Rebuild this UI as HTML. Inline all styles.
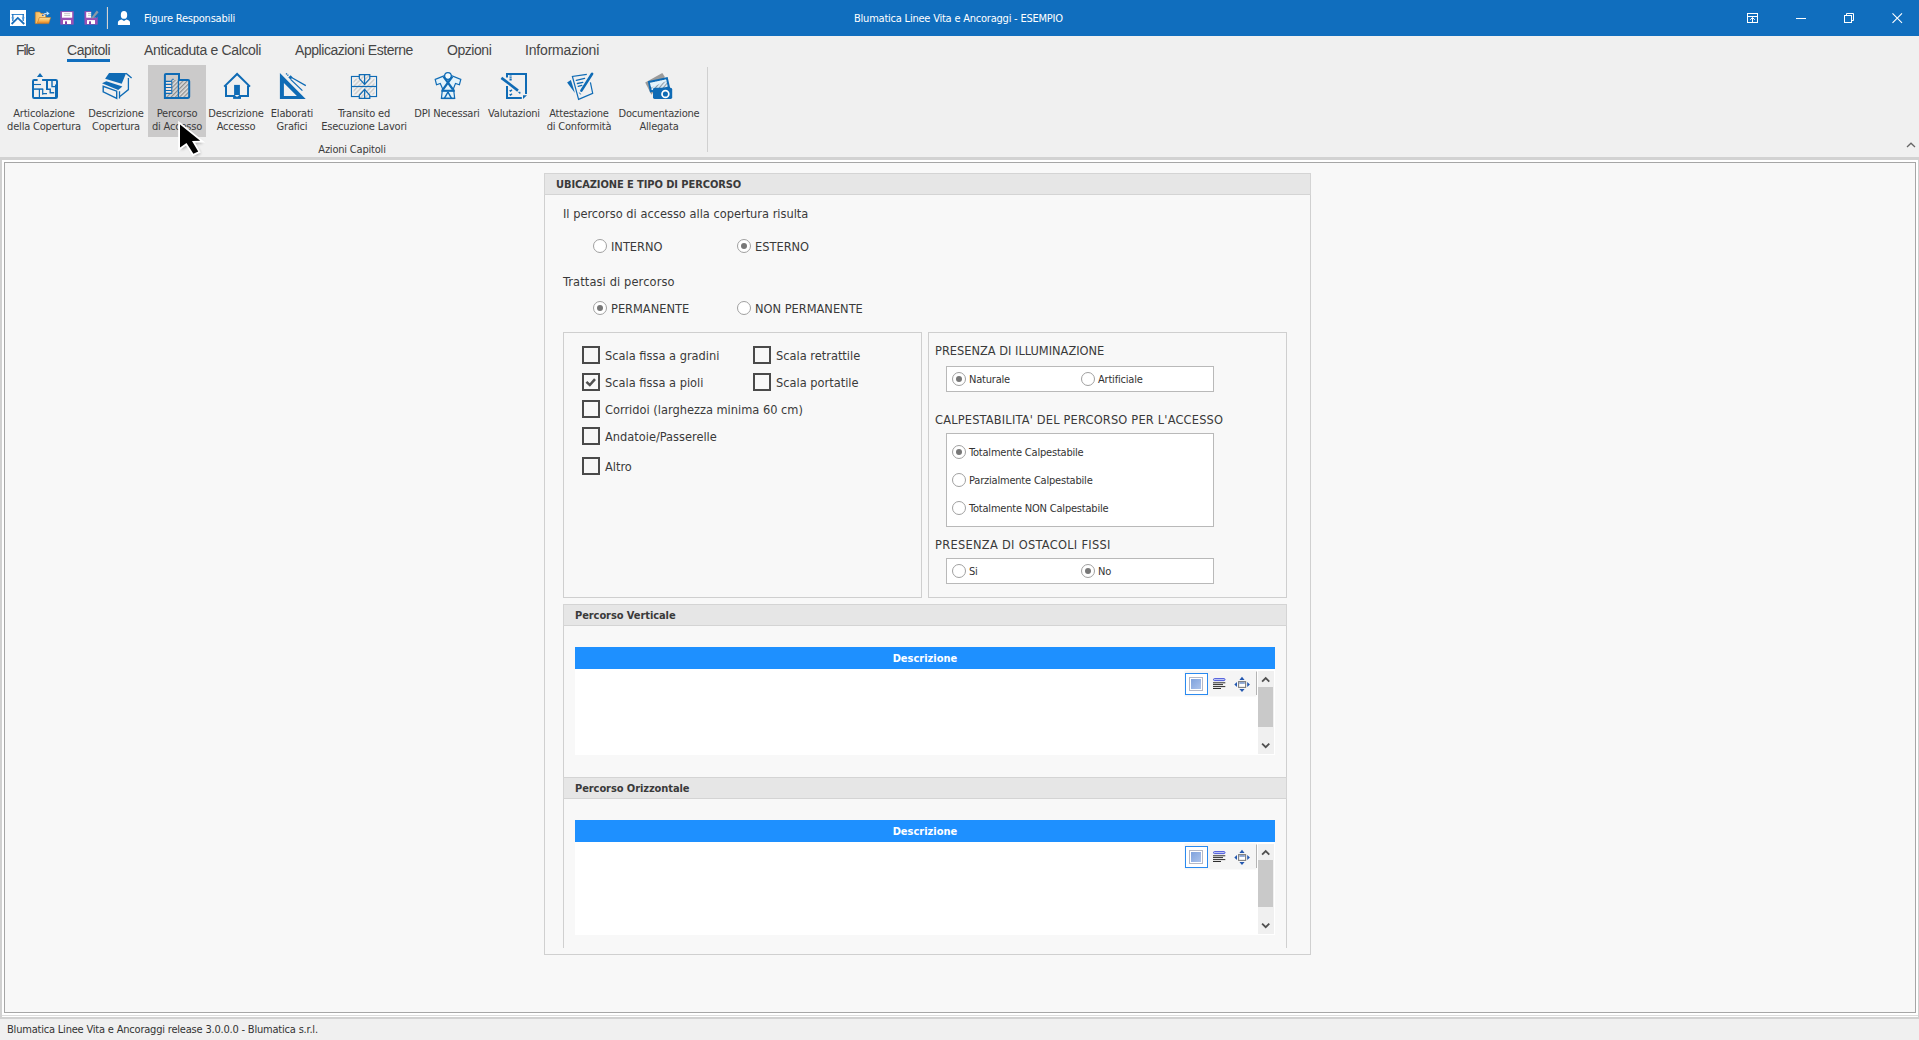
<!DOCTYPE html>
<html lang="it">
<head>
<meta charset="utf-8">
<title>Blumatica Linee Vita e Ancoraggi - ESEMPIO</title>
<style>
*{box-sizing:border-box;margin:0;padding:0}
html,body{width:1919px;height:1040px;overflow:hidden;background:#f0f0f0}
body{position:relative;font-family:"Liberation Sans",sans-serif;color:#333;font-size:11px}
.abs{position:absolute}
#titlebar{position:absolute;left:0;top:0;width:1919px;height:36px;background:#106ebe;color:#fff}
#titlebar .t{position:absolute;top:12px;font-family:"DejaVu Sans Condensed","Liberation Sans",sans-serif;font-size:11px;line-height:14px;white-space:nowrap;letter-spacing:-0.22px}
#menubar{position:absolute;left:0;top:36px;width:1919px;height:28px;background:#f0f0f0}
#menubar span{position:absolute;top:5px;font-size:14px;line-height:18px;color:#464646;white-space:nowrap;letter-spacing:-0.45px}
#ribbon{position:absolute;left:0;top:64px;width:1919px;height:93px;background:#f0f0f0}
.rb{position:absolute;top:43px;font-family:"DejaVu Sans Condensed","Liberation Sans",sans-serif;font-size:11px;line-height:13px;color:#3c3c3c;text-align:center;white-space:nowrap;transform:translateX(-50%);letter-spacing:-0.2px}
.ric{position:absolute;top:8px;width:28px;height:28px}
#band{position:absolute;left:0;top:157px;width:1919px;height:3px;background:#d2d2d2}
#client{position:absolute;left:0;top:160px;width:1919px;height:859px;background:#d1d1d1}
#client .w{position:absolute;left:2px;top:0;width:1916px;height:857px;background:#fff}
#client .l{position:absolute;left:2px;top:855px;width:1916px;height:1px;background:#dcdcdc}
#client .g{position:absolute;left:4px;top:2px;width:1912px;height:851px;background:#a6a6a6}
#client .c{position:absolute;left:5px;top:3px;width:1910px;height:849px;background:#f8f8f8}
#status{position:absolute;left:0;top:1019px;width:1919px;height:21px;background:#f0f0f0}
#status span{position:absolute;left:7px;top:4px;font-family:"DejaVu Sans Condensed","Liberation Sans",sans-serif;letter-spacing:-0.2px;font-size:11px;line-height:14px;color:#333;white-space:nowrap}
.v{font-family:"DejaVu Sans","Liberation Sans",sans-serif}
.lab{position:absolute;font-family:"DejaVu Sans Condensed","Liberation Sans",sans-serif;font-size:12.7px;line-height:15px;color:#3a3a3a;white-space:nowrap}
.slab{position:absolute;margin-top:1px;font-family:"DejaVu Sans Condensed","Liberation Sans",sans-serif;font-size:11px;line-height:14px;color:#333;white-space:nowrap;letter-spacing:-0.2px}
.hdr{position:absolute;background:#e6e6e6;border:1px solid #d4d4d4;font-family:"DejaVu Sans Condensed","Liberation Sans",sans-serif;font-weight:bold;font-size:11px;color:#3a3a3a;white-space:nowrap;letter-spacing:-0.08px}
.box{position:absolute;border:1px solid #cfcfcf;background:#f8f8f8}
.wbox{position:absolute;border:1px solid #b9b9b9;background:#fff}
.radio{position:absolute;width:14px;height:14px;border-radius:50%;border:1px solid #a0a0a0;background:#fff}
.radio.on::after{content:"";position:absolute;left:3px;top:3px;width:6px;height:6px;border-radius:50%;background:#777}
.chk{position:absolute;width:18px;height:18px;border:2px solid #4a4a4a;background:#f8f8f8}
.bluebar{position:absolute;background:#1e90ff;color:#fff;font-family:"DejaVu Sans Condensed","Liberation Sans",sans-serif;font-weight:bold;font-size:11px;text-align:center}

.sb{position:absolute;width:16px;background:#f0f0f0}
.sb i{position:absolute;left:0;width:16px;background:#c8c8c8}
.lab.up{letter-spacing:0.1px}
</style>
</head>
<body>
<!-- TITLE BAR -->
<div id="titlebar">
  <svg class="abs" style="left:0;top:0" width="140" height="36" viewBox="0 0 140 36">
    <defs>
      <linearGradient id="fg" x1="0" y1="0" x2="0" y2="1"><stop offset="0" stop-color="#ffe9a8"/><stop offset="0.6" stop-color="#f8b04a"/><stop offset="1" stop-color="#d9761c"/></linearGradient>
      <linearGradient id="fb" x1="0" y1="0" x2="1" y2="0"><stop offset="0" stop-color="#f6b85a"/><stop offset="1" stop-color="#fde6a6"/></linearGradient>
    </defs>
    <!-- app icon -->
    <rect x="10" y="10" width="16" height="16" fill="#fff"/>
    <path d="M11.6 24 L17.8 17.9 L24.2 24" fill="none" stroke="#1a6fbd" stroke-width="1.8"/>
    <path d="M11.5 14.5 H24" stroke="#3b8ad0" stroke-width="1"/>
    <path d="M12.8 14 V21 M23.2 14 V21" stroke="#1a6fbd" stroke-width="1.2"/>
    <path d="M11.2 17.5 H14.4 L12.8 20 Z M21.6 17.5 H24.8 L23.2 20 Z" fill="#4a9ade"/>
    <!-- folder -->
    <path d="M35.3 12.6 Q35.3 12 36 12 H39.6 L41 13.6 H45.6 V17.5 H39.5 L37.5 23.6 H35.3 Z" fill="url(#fb)" stroke="#d9811f" stroke-width="0.6"/>
    <path d="M39.4 17.6 H50.6 L48.7 23.6 H37.2 Z" fill="url(#fg)" stroke="#d9811f" stroke-width="0.6"/>
    <path d="M42.4 15.8 Q44 13.2 47.2 13.6" fill="none" stroke="#2a4fa8" stroke-width="1.6"/>
    <path d="M43 15.2 Q44.4 13 47.4 13.2" fill="none" stroke="#bfe6ff" stroke-width="1.1"/>
    <path d="M46.6 11.2 L49.6 13.4 L46.8 15.4 Z" fill="#bfe6ff"/>
    <!-- save -->
    <rect x="60.3" y="11.2" width="13.4" height="13.4" fill="#9a50b4"/>
    <rect x="62" y="12.1" width="10.2" height="5.6" fill="#fff"/>
    <path d="M64.2 13.6 H70.2 M64.2 15.4 H70.2" stroke="#b9b9b9" stroke-width="0.8"/>
    <rect x="63" y="20.1" width="8" height="3.9" fill="#fff"/>
    <rect x="65" y="21.3" width="2" height="2.7" fill="#8a3fa6"/>
    <!-- save as -->
    <rect x="84.5" y="11.2" width="13.2" height="13.4" fill="#9a50b4"/>
    <rect x="86.2" y="12.1" width="9.8" height="5.6" fill="#fff"/>
    <path d="M88 13.6 H92 M88 15.4 H92" stroke="#b9b9b9" stroke-width="0.8"/>
    <rect x="87" y="20.1" width="8" height="3.9" fill="#fff"/>
    <rect x="89" y="21.3" width="2" height="2.7" fill="#8a3fa6"/>
    <path d="M91.2 11 H98 V16.4 L96.6 17.8 H91.2 Z" fill="#106ebe"/>
    <path d="M92 16.8 L96.8 10.6 L98.6 12.2 L93.6 18 L91.6 18.4 Z" fill="#8d99a6"/>
    <!-- separator -->
    <rect x="106.9" y="7" width="1" height="22" fill="#e9ddd3"/>
    <!-- user -->
    <ellipse cx="124" cy="14.9" rx="3.2" ry="3.9" fill="#fff"/>
    <path d="M117.9 24.9 V22.6 Q117.9 20.6 121.6 19.6 L124 21 L126.4 19.6 Q130 20.6 130 22.6 V24.9 Z" fill="#fff"/>
  </svg>
  <svg class="abs" style="left:1740px;top:0" width="179" height="36" viewBox="1740 0 179 36" fill="none" stroke="#fff" stroke-width="1">
    <rect x="1747.5" y="13.5" width="10" height="9"/>
    <path d="M1747.5 16.5 H1757.5 M1752.5 17.6 V22.5 M1750.2 19.8 L1752.5 17.5 L1754.8 19.8"/>
    <path d="M1796 18.5 H1806"/>
    <path d="M1846.5 15 V13.5 H1853.5 V20.5 H1852"/>
    <rect x="1844.5" y="15.5" width="7" height="7"/>
    <path d="M1892.5 13.3 L1902 22.9 M1902 13.3 L1892.5 22.9" stroke-width="1.1"/>
  </svg>

  <span class="t" style="left:144px">Figure Responsabili</span>
  <span class="t" style="left:854px">Blumatica Linee Vita e Ancoraggi - ESEMPIO</span>
</div>
<!-- MENU BAR -->
<div id="menubar">
  <span style="left:16px;letter-spacing:-1.1px">File</span>
  <span style="left:67px">Capitoli</span>
  <span style="left:144px;letter-spacing:-0.33px">Anticaduta e Calcoli</span>
  <span style="left:295px">Applicazioni Esterne</span>
  <span style="left:447px">Opzioni</span>
  <span style="left:525px;letter-spacing:-0.18px">Informazioni</span>
  <div class="abs" style="left:67px;top:23px;width:43px;height:3px;background:#106ebe"></div>
</div>
<!-- RIBBON -->
<div id="ribbon">
  <div class="abs" style="left:148px;top:1px;width:58px;height:72px;background:#cbcaca"></div>
  <div class="rb" style="left:44px">Articolazione<br>della Copertura</div>
  <div class="rb" style="left:116px">Descrizione<br>Copertura</div>
  <div class="rb" style="left:177px">Percorso<br>di Accesso</div>
  <div class="rb" style="left:236px">Descrizione<br>Accesso</div>
  <div class="rb" style="left:292px">Elaborati<br>Grafici</div>
  <div class="rb" style="left:364px">Transito ed<br>Esecuzione Lavori</div>
  <div class="rb" style="left:447px">DPI Necessari</div>
  <div class="rb" style="left:514px">Valutazioni</div>
  <div class="rb" style="left:579px">Attestazione<br>di Conformità</div>
  <div class="rb" style="left:659px">Documentazione<br>Allegata</div>
  <div class="rb" style="left:352px;top:79px">Azioni Capitoli</div>
  <div class="abs" style="left:707px;top:3px;width:1px;height:85px;background:#d0d0d0"></div>
</div>

<svg class="abs" style="left:0;top:64px" width="720" height="42" viewBox="0 64 720 42">
  <defs>
    <pattern id="h1" width="3" height="3" patternUnits="userSpaceOnUse" patternTransform="rotate(-45)"><rect width="3" height="3" fill="#dedede"/><rect width="3" height="1.3" fill="#8f8f8f"/></pattern>
    <pattern id="h2" width="3.2" height="3.2" patternUnits="userSpaceOnUse" patternTransform="rotate(-45)"><rect width="3.2" height="3.2" fill="#f0f0f0"/><rect width="3.2" height="1.5" fill="#cfcfcf"/></pattern>
    <pattern id="h3" width="3" height="3" patternUnits="userSpaceOnUse" patternTransform="rotate(-50)"><rect width="3" height="3" fill="#dceffa"/><rect width="3" height="1.1" fill="#8f9aa3"/></pattern>
  </defs>
  <!-- 1 Articolazione -->
  <g fill="none" stroke="#0f6bb5">
    <rect x="33" y="80" width="24" height="18" rx="1.2" stroke-width="2"/>
    <rect x="37.6" y="78.5" width="4.7" height="3.2" fill="#f0f0f0" stroke="none"/>
    <path d="M40 72.9 L43.1 77 H36.9 Z" fill="#0f6bb5" stroke="none"/>
    <path d="M34 84.5 H41" stroke-width="1.1"/>
    <path d="M34 89.1 H43.2" stroke-width="1.5"/>
    <path d="M39.4 89 V97 M42.7 89 V94.8 M42.6 93.6 H47" stroke-width="1.2"/>
    <path d="M42.3 80 H56" stroke-width="2"/>
    <path d="M47 80 V89.6" stroke-width="2"/>
    <path d="M46 89.2 H50.2 V92.7 H54.2" stroke-width="1.4"/>
    <path d="M52 80 V86.6 H55" stroke-width="1.4"/>
    <path d="M55.6 84.6 V97" stroke-width="1.2"/>
  </g>
  <!-- 2 Descrizione Copertura -->
  <g fill="#0f6bb5" stroke="none">
    <path d="M109.1 73.1 H126.2 L121.7 83.7 L105.1 78.7 Z"/>
    <path d="M106.3 81.2 L122.4 86.4 L118.2 89.9 L102 83.3 Z"/>
  </g>
  <g fill="none" stroke="#0f6bb5" stroke-width="1.4">
    <path d="M126 73.2 L131.6 78"/>
    <path d="M103.2 86.3 V91.8 L116.7 98.3 V91.2 Z"/>
    <path d="M128.4 78 V89.6 L119.6 96.8 M119.5 91.2 V98.6" stroke-width="1.3"/>
  </g>
  <!-- 3 Percorso di Accesso -->
  <g fill="none" stroke="#0f6bb5">
    <path d="M172 80 H189 V97.6 H165 V94 H172 Z" fill="url(#h1)" stroke="none"/>
    <path d="M165 81.5 H171.5 V93.5 H165 Z" fill="#f3e4dc" stroke="none"/>
    <path d="M165 81.3 H171.7 M165 84.4 H171.7 M165 87.5 H171.7 M165 90.5 H171.7 M165 93.4 H171.7" stroke-width="1.2"/>
    <path d="M171.8 93.8 V80 Q171.8 79.3 172.6 79.3 H173.8" stroke-width="1"/>
    <path d="M178.4 79.5 V98" stroke-width="1.3"/>
    <path d="M164.9 97.9 V75 Q164.9 73.9 166 73.9 H179 V80 H188 Q189.2 80 189.2 81.2 V96.8 Q189.2 97.9 188 97.9 Z" stroke-width="2"/>
  </g>
  <!-- 4 Descrizione Accesso -->
  <g fill="none" stroke="#0f6bb5" stroke-width="2">
    <path d="M224.2 86.6 L237.1 74 L250 86.6" stroke-linejoin="miter"/>
    <path d="M226 85.5 V95.9 H248 V85.5"/>
    <rect x="234.1" y="84.9" width="5.8" height="10.2" fill="#0f6bb5" stroke="none"/>
    <path d="M233.1 95.2 H241 V98.9 H233.1 Z" fill="#0f6bb5" stroke="none"/>
    <path d="M234.8 95.1 Q237 98.2 239.3 95.1 Z" fill="#f4f4f4" stroke="none"/>
  </g>
  <!-- 5 Elaborati Grafici -->
  <g fill="#0f6bb5" stroke="none">
    <path d="M279.9 73.1 V98.9 H305.7 Z M283.9 83 L296.9 95.9 H283.9 Z" fill-rule="evenodd"/>
    <path d="M288.3 77.3 L290.7 75.3 L292.8 77.6 L290.3 79.6 Z"/>
  </g>
  <g fill="none" stroke="#0f6bb5">
    <path d="M286 73.4 L288.8 76" stroke-width="1.4" stroke-dasharray="1.3 0.6"/>
    <path d="M292 77.7 L305.8 85.6 M290.6 79.4 L302.4 90.6" stroke-width="1.25"/>
  </g>
  <!-- 6 Transito -->
  <g fill="none" stroke="#0f6bb5" stroke-width="1.2">
    <rect x="351.5" y="76.5" width="25" height="20" fill="url(#h2)"/>
    <rect x="351.5" y="76.5" width="25" height="20" stroke="#f0f0f0" stroke-width="1.6" transform="translate(364 86.5) scale(0.9 0.86) translate(-364 -86.5)"/>
    <path d="M351.5 86.5 H376.5"/>
    <path d="M359.3 74.6 H369.8 V78.6 L364.6 84.4 L359.3 78.6 Z" fill="url(#h2)"/>
    <path d="M364.6 74.6 V84.4"/>
    <path d="M359.3 98.4 H369.8 V95.3 L364.6 89.4 L359.3 95.3 Z" fill="url(#h2)"/>
    <path d="M364.6 98.4 V89.4"/>
  </g>
  <!-- 7 DPI -->
  <g fill="none" stroke="#0f6bb5">
    <path d="M444.6 75.6 L435.2 79.4 L436.5 84.7 L440.3 83.4 L442.5 88.6 L441.4 98.4 H454.7 L453.5 88.6 L455.5 83.4 L459.4 84.7 L460.8 79.4 L451.3 75.6 A3.6 3.6 0 0 0 444.6 75.6 Z" fill="#e3f3fb" stroke-width="1.2"/>
    <circle cx="447.95" cy="76" r="3.3" stroke-width="1.2" fill="#f2fafd"/>
    <path d="M443.6 76.6 L453 89.6 M452.3 76.6 L442.9 89.6" stroke-width="2.3"/>
    <path d="M441.4 90.8 H454.8" stroke-width="2.1"/>
    <path d="M447.95 92 L444.4 98.4 M447.95 92 L451.5 98.4" stroke-width="1.5"/>
    <path d="M441.4 98.4 H454.7" stroke-width="1.4"/>
  </g>
  <!-- 8 Valutazioni -->
  <g fill="none" stroke="#0f6bb5">
    <path d="M507 77.6 V74.1 H526 V94" stroke-width="2"/>
    <path d="M507 86 V98 H521.8" stroke-width="2"/>
    <path d="M523 95.2 H527 L523 98.9 Z" fill="#0f6bb5" stroke="none"/>
    <path d="M501.4 77.9 L518 90.6" stroke-width="2.6"/>
    <path d="M518.4 92.2 L520.2 92 L520 93.8 Z" fill="#0f6bb5" stroke-width="0.5"/>
    <path d="M510.6 75.4 V81" stroke-width="2.2" stroke-dasharray="1.2 0.6"/>
    <path d="M509.6 90.2 L510.6 91.2 L512 89.8 M509.6 94.2 L510.6 95.2 L512 93.8" stroke-width="1.3"/>
  </g>
  <!-- 9 Attestazione -->
  <g fill="none" stroke="#0f6bb5">
    <path d="M586.8 74.4 L572.4 76.5 L578.6 99.4 L592.7 93.3 L590.4 82.3" stroke-width="1.2"/>
    <path d="M576.3 80.4 L584.6 78.3 M577.4 83.5 L582.8 82.3 M578.2 86.4 L581.8 85.4" stroke-width="1.3" stroke-linecap="round"/>
    <path d="M567.1 82.4 L570.9 80 L574.9 93 Z" fill="#0f6bb5" stroke="none"/>
    <path d="M592.1 73.8 L581.4 90.6" stroke-width="2.6" stroke-linecap="round"/>
    <path d="M579.4 92.6 L580.6 94.4" stroke-width="1"/>
  </g>
  <!-- 10 Documentazione -->
  <g>
    <path d="M645.2 82.6 L662.3 73.1 L664.9 77 L651.4 94.7 Z" fill="#9b9b9b"/>
    <path d="M649 82 L666.9 78.2 L669 87.6 L650.8 91.4 Z" fill="url(#h3)" stroke="#0f6bb5" stroke-width="2"/>
    <path d="M650 83 L666 79.4 L666.4 81 L651.2 87.5 Z" fill="#e4f4fc"/>
    <rect x="653" y="87.8" width="19.2" height="11.1" rx="1.6" fill="#0f6bb5"/>
    <circle cx="665.4" cy="94" r="3.4" fill="#0f6bb5" stroke="#fff" stroke-width="1.7"/>
  </g>
</svg>
<svg class="abs" style="left:1900px;top:136px" width="19" height="16" viewBox="1900 136 19 16"><path d="M1907 147 L1911 143.2 L1915 147" fill="none" stroke="#666" stroke-width="1.3"/></svg>
<div id="band"></div>
<!-- CLIENT AREA -->
<div id="client"><div class="w"></div><div class="l"></div><div class="g"></div><div class="c"></div></div>
<!-- MAIN PANEL -->
<div id="panel" class="abs" style="left:544px;top:173px;width:767px;height:782px;border:1px solid #d0d0d0;background:#f8f8f8"></div>
<div class="hdr" style="left:544px;top:173px;width:767px;height:22px;line-height:22px;padding-left:11px">UBICAZIONE E TIPO DI PERCORSO</div>

<div class="lab" style="left:563px;top:206px">Il percorso di accesso alla copertura risulta</div>
<div class="radio" style="left:593px;top:239px"></div><div class="lab" style="left:611px;top:239px">INTERNO</div>
<div class="radio on" style="left:737px;top:239px"></div><div class="lab" style="left:755px;top:239px">ESTERNO</div>
<div class="lab" style="left:563px;top:274px;letter-spacing:0.13px">Trattasi di percorso</div>
<div class="radio on" style="left:593px;top:301px"></div><div class="lab" style="left:611px;top:301px">PERMANENTE</div>
<div class="radio" style="left:737px;top:301px"></div><div class="lab" style="left:755px;top:301px">NON PERMANENTE</div>
<!-- LEFT BOX -->
<div class="box" style="left:563px;top:332px;width:359px;height:266px"></div>
<div class="chk" style="left:582px;top:346px"></div><div class="lab" style="left:605px;top:348px">Scala fissa a gradini</div>
<div class="chk" style="left:753px;top:346px"></div><div class="lab" style="left:776px;top:348px">Scala retrattile</div>
<div class="chk on" style="left:582px;top:373px"><svg width="14" height="14" viewBox="0 0 14 14" style="position:absolute;left:0;top:0"><path d="M2.4 6.8 L5.8 10 L11 4.2" fill="none" stroke="#505050" stroke-width="2.5"/></svg></div><div class="lab" style="left:605px;top:375px">Scala fissa a pioli</div>
<div class="chk" style="left:753px;top:373px"></div><div class="lab" style="left:776px;top:375px">Scala portatile</div>
<div class="chk" style="left:582px;top:400px"></div><div class="lab" style="left:605px;top:402px">Corridoi (larghezza minima 60 cm)</div>
<div class="chk" style="left:582px;top:427px"></div><div class="lab" style="left:605px;top:429px">Andatoie/Passerelle</div>
<div class="chk" style="left:582px;top:457px"></div><div class="lab" style="left:605px;top:459px">Altro</div>
<!-- RIGHT BOX -->
<div class="box" style="left:928px;top:332px;width:359px;height:266px"></div>
<div class="lab" style="left:935px;top:343px;letter-spacing:0">PRESENZA DI ILLUMINAZIONE</div>
<div class="wbox" style="left:946px;top:366px;width:268px;height:26px"></div>
<div class="radio on" style="left:952px;top:372px"></div><div class="slab" style="left:969px;top:372px">Naturale</div>
<div class="radio" style="left:1081px;top:372px"></div><div class="slab" style="left:1098px;top:372px">Artificiale</div>
<div class="lab" style="left:935px;top:412px;letter-spacing:0.19px">CALPESTABILITA' DEL PERCORSO PER L'ACCESSO</div>
<div class="wbox" style="left:946px;top:433px;width:268px;height:94px"></div>
<div class="radio on" style="left:952px;top:445px"></div><div class="slab" style="left:969px;top:445px">Totalmente Calpestabile</div>
<div class="radio" style="left:952px;top:473px"></div><div class="slab" style="left:969px;top:473px">Parzialmente Calpestabile</div>
<div class="radio" style="left:952px;top:501px"></div><div class="slab" style="left:969px;top:501px">Totalmente NON Calpestabile</div>
<div class="lab" style="left:935px;top:537px;letter-spacing:0.3px">PRESENZA DI OSTACOLI FISSI</div>
<div class="wbox" style="left:946px;top:558px;width:268px;height:26px"></div>
<div class="radio" style="left:952px;top:564px"></div><div class="slab" style="left:969px;top:564px">Si</div>
<div class="radio on" style="left:1081px;top:564px"></div><div class="slab" style="left:1098px;top:564px">No</div>
<!-- PERCORSO VERTICALE -->
<div class="abs" style="left:563px;top:604px;width:724px;height:344px;border-left:1px solid #d0d0d0;border-right:1px solid #d0d0d0"></div>
<div class="hdr" style="left:563px;top:604px;width:724px;height:22px;line-height:22px;padding-left:11px">Percorso Verticale</div>
<div class="bluebar" style="left:575px;top:647px;width:700px;height:22px;line-height:24px">Descrizione</div>
<div class="abs" style="left:575px;top:669px;width:700px;height:86px;background:#fff"></div>

<svg class="abs" style="left:1180px;top:665px" width="100" height="95" viewBox="1180 665 100 95">
  <defs><linearGradient id="bg0" x1="0" y1="0" x2="1" y2="1"><stop offset="0" stop-color="#7fa2dc"/><stop offset="1" stop-color="#aac2ec"/></linearGradient></defs>
  <g transform="translate(0 0)">
    <rect x="1184.5" y="670.5" width="72" height="26" fill="#f5f5f5"/>
    <rect x="1185.5" y="673.5" width="22" height="21" fill="#fff" stroke="#2a8af0" stroke-width="1"/>
    <rect x="1189.5" y="677.5" width="13" height="13" fill="#fff" stroke="#b4b8c6" stroke-width="1"/>
    <rect x="1191" y="679" width="10" height="10" fill="url(#bg0)"/>
    <rect x="1213.5" y="678.6" width="11.5" height="2" rx="1" fill="#c9d2f7" stroke="#3b49d8" stroke-width="0.9"/>
    <path d="M1213 682.8 H1225.3 M1213 684.6 H1223 M1213 686.6 H1225.3 M1213 688.5 H1221" stroke="#2e2e2e" stroke-width="1"/>
    <rect x="1238.6" y="681.6" width="7" height="5.8" fill="#fff" stroke="#7f7f7f" stroke-width="1.1"/>
    <path d="M1239.4 683 H1244.8" stroke="#2c5cb0" stroke-width="1"/>
    <path d="M1242 676.8 L1244.6 679.9 H1239.4 Z M1242 692 L1244.6 689 H1239.4 Z M1234.3 684.5 L1237 682 V687 Z M1249.9 684.5 L1247.2 682 V687 Z" fill="#2458b0"/>
    <path d="M1256.5 671.5 V695" stroke="#b4b4b4" stroke-width="1"/>
  </g>
  <rect x="1258" y="671" width="16" height="83" fill="#f0f0f0"/>
  <rect x="1258" y="687" width="15" height="40" fill="#c9c9c9"/>
  <path d="M1262.1 681.6 L1265.7 678 L1269.3 681.6" fill="none" stroke="#505050" stroke-width="1.8"/>
  <path d="M1262.1 743.6 L1265.7 747.2 L1269.3 743.6" fill="none" stroke="#505050" stroke-width="1.8"/>
</svg>
<!-- PERCORSO ORIZZONTALE -->
<div class="hdr" style="left:563px;top:777px;width:724px;height:22px;line-height:22px;padding-left:11px">Percorso Orizzontale</div>
<div class="bluebar" style="left:575px;top:820px;width:700px;height:22px;line-height:24px">Descrizione</div>
<div class="abs" style="left:575px;top:842px;width:700px;height:93px;background:#fff"></div>


<svg class="abs" style="left:1180px;top:838px" width="100" height="102" viewBox="1180 838 100 102">
  <defs><linearGradient id="bg173" x1="0" y1="0" x2="1" y2="1"><stop offset="0" stop-color="#7fa2dc"/><stop offset="1" stop-color="#aac2ec"/></linearGradient></defs>
  <g transform="translate(0 173)">
    <rect x="1184.5" y="670.5" width="72" height="26" fill="#f5f5f5"/>
    <rect x="1185.5" y="673.5" width="22" height="21" fill="#fff" stroke="#2a8af0" stroke-width="1"/>
    <rect x="1189.5" y="677.5" width="13" height="13" fill="#fff" stroke="#b4b8c6" stroke-width="1"/>
    <rect x="1191" y="679" width="10" height="10" fill="url(#bg173)"/>
    <rect x="1213.5" y="678.6" width="11.5" height="2" rx="1" fill="#c9d2f7" stroke="#3b49d8" stroke-width="0.9"/>
    <path d="M1213 682.8 H1225.3 M1213 684.6 H1223 M1213 686.6 H1225.3 M1213 688.5 H1221" stroke="#2e2e2e" stroke-width="1"/>
    <rect x="1238.6" y="681.6" width="7" height="5.8" fill="#fff" stroke="#7f7f7f" stroke-width="1.1"/>
    <path d="M1239.4 683 H1244.8" stroke="#2c5cb0" stroke-width="1"/>
    <path d="M1242 676.8 L1244.6 679.9 H1239.4 Z M1242 692 L1244.6 689 H1239.4 Z M1234.3 684.5 L1237 682 V687 Z M1249.9 684.5 L1247.2 682 V687 Z" fill="#2458b0"/>
    <path d="M1256.5 671.5 V695" stroke="#b4b4b4" stroke-width="1"/>
  </g>
  <rect x="1258" y="844" width="16" height="90" fill="#f0f0f0"/>
  <rect x="1258" y="860" width="15" height="47" fill="#c9c9c9"/>
  <path d="M1262.1 854.6 L1265.7 851 L1269.3 854.6" fill="none" stroke="#505050" stroke-width="1.8"/>
  <path d="M1262.1 923.6 L1265.7 927.2 L1269.3 923.6" fill="none" stroke="#505050" stroke-width="1.8"/>
</svg>
<svg class="abs" style="left:170px;top:112px;z-index:50" width="48" height="52" viewBox="170 112 48 52">
  <defs><filter id="cs" x="-30%" y="-30%" width="180%" height="180%"><feGaussianBlur stdDeviation="1.6"/></filter></defs>
  <path d="M181.5 126 V150 L188 145.5 L195 156 L200.5 153.5 L194.5 143.5 L203 143.2 Z" fill="#000" opacity="0.35" filter="url(#cs)"/>
  <path d="M180 124.6 V147.6 L186.5 143 L193.4 153.8 L198.2 151.6 L192 141 L200.2 140.8 Z" fill="#000" stroke="#fff" stroke-width="3.7" stroke-linejoin="miter" paint-order="stroke"/>
</svg>
<!-- STATUS BAR -->
<div id="status"><span>Blumatica Linee Vita e Ancoraggi release 3.0.0.0 - Blumatica s.r.l.</span></div>
</body>
</html>
